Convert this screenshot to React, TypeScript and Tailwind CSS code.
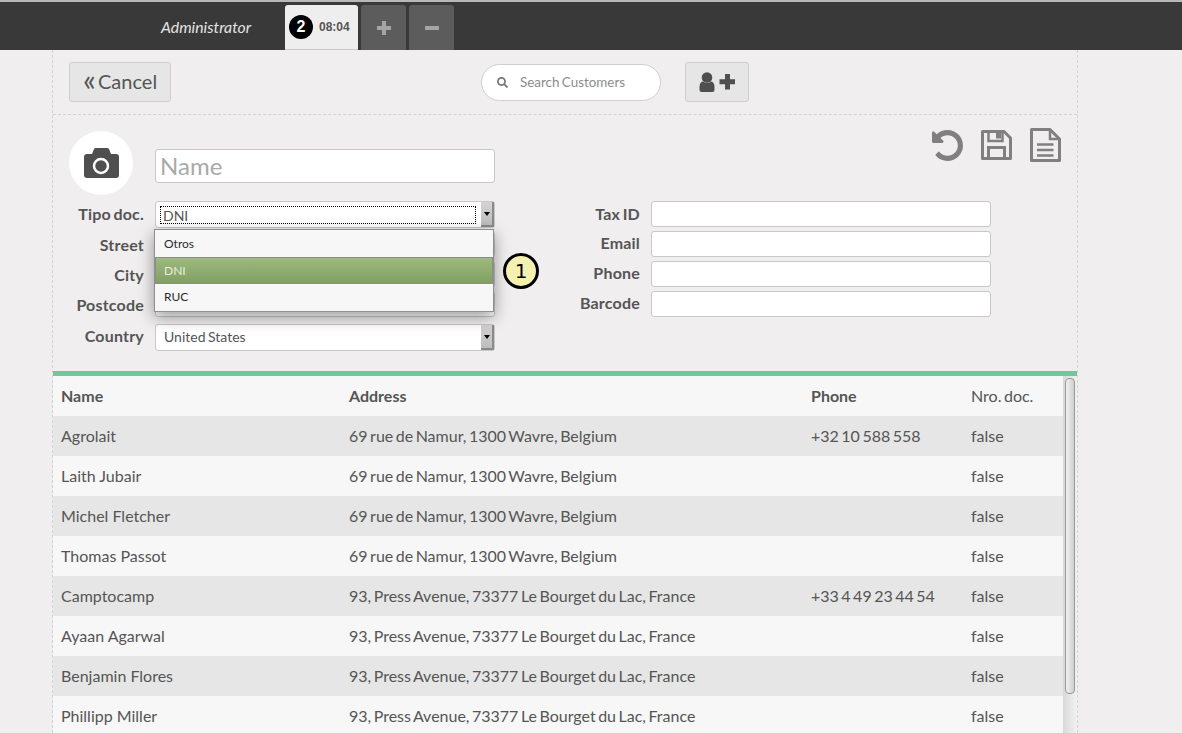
import React from "react";
import { FaSearch } from "react-icons/fa";

const rows: [string, string, string][] = [
  ["Agrolait", "69 rue de Namur, 1300 Wavre, Belgium", "+32 10 588 558"],
  ["Laith Jubair", "69 rue de Namur, 1300 Wavre, Belgium", ""],
  ["Michel Fletcher", "69 rue de Namur, 1300 Wavre, Belgium", ""],
  ["Thomas Passot", "69 rue de Namur, 1300 Wavre, Belgium", ""],
  ["Camptocamp", "93, Press Avenue, 73377 Le Bourget du Lac, France", "+33 4 49 23 44 54"],
  ["Ayaan Agarwal", "93, Press Avenue, 73377 Le Bourget du Lac, France", ""],
  ["Benjamin Flores", "93, Press Avenue, 73377 Le Bourget du Lac, France", ""],
  ["Phillipp Miller", "93, Press Avenue, 73377 Le Bourget du Lac, France", ""],
];

function Arrow() {
  return (
    <div className="w-[13px] h-full flex items-center justify-center bg-gradient-to-b from-[#d4d4d4] to-[#bdbdbd] border-r-2 border-b-2 border-[#8a8a8a]">
      <div className="w-0 h-0 border-l-[3px] border-r-[3px] border-t-[4px] border-l-transparent border-r-transparent border-t-black" />
    </div>
  );
}

function Label({ children, wide = false, leading = "leading-[26px]" }: { children: React.ReactNode; wide?: boolean; leading?: string }) {
  return (
    <div className={(wide ? "w-[75px] " : "w-[70px] ") + leading + " text-right font-bold text-[16px] tracking-[0.2px] [word-spacing:-1.5px] text-[#555555] whitespace-nowrap"}>
      {children}
    </div>
  );
}

function Field({ className = "" }: { className?: string }) {
  return <div className={"bg-white border border-[#c8c8c8] rounded-[3px] h-[26px] " + className} />;
}

function PlusIcon() {
  return (
    <svg width="14" height="14" viewBox="0 0 14 14" fill="#a5a5a5">
      <path d="M5 0h4v5h5v4H9v5H5V9H0V5h5z" />
    </svg>
  );
}

function MinusIcon() {
  return (
    <svg width="14" height="14" viewBox="0 0 14 14" fill="#a5a5a5">
      <path d="M0 5h14v4H0z" />
    </svg>
  );
}

function UserPlusIcon() {
  return (
    <svg width="36" height="20" viewBox="0 0 36 20" fill="#4f4f4f">
      <circle cx="8" cy="5.5" r="5.3" />
      <path d="M.5 20V15Q.5 10 4 9.5Q8 12.5 12 9.5Q15.5 10 15.5 15V18Q15.5 20 13.5 20H2.5Q.5 20 .5 18Z" />
      <path d="M26 2h5v5.2h5v5h-5v5.3h-5v-5.3h-5.5v-5h5.5z" />
    </svg>
  );
}

function CameraIcon() {
  return (
    <svg width="35" height="30" viewBox="0 0 35 30">
      <path fill="#4f4f4f" d="M8 6L10 1Q10.5 0 12 0H23Q24.5 0 25 1L27 6H32Q35 6 35 9V27Q35 30 32 30H3Q0 30 0 27V9Q0 6 3 6Z" />
      <circle cx="17" cy="18" r="7" fill="#4f4f4f" stroke="#ffffff" strokeWidth="2.5" />
    </svg>
  );
}

function UndoIcon() {
  return (
    <svg width="31" height="31" viewBox="0 128 1536 1536" fill="#808080">
      <path d="M1536 896q0 156-61 298t-164 245-245 164-298 61q-172 0-327-72.5t-264-204.5q-7-10-6.5-22.5t8.5-20.5l137-138q10-9 25-9 16 2 23 12 73 95 179 147t225 52q104 0 198.5-40.5t163.5-109.5 109.5-163.5 40.5-198.5-40.5-198.5-109.5-163.5-163.5-109.5-198.5-40.5q-98 0-188 35.5t-160 101.5l137 138q31 30 14 69-17 40-59 40h-448q-26 0-45-19t-19-45v-448q0-42 40-59 39-17 69 14l130 129q107-101 244.5-156.5t284.5-55.5q156 0 298 61t245 164 164 245 61 298z" />
    </svg>
  );
}

function SaveIcon() {
  return (
    <svg width="31" height="30" viewBox="0 0 31 30" fill="none" stroke="#808080">
      <path strokeWidth="3" strokeLinejoin="round" d="M1.5 1.5H23L29.5 8V28.5H1.5Z" />
      <path strokeWidth="2.5" d="M7.5 1.5V11H21.5V1.5" />
      <path strokeWidth="3" d="M7.5 28.5V17.5H23.5V28.5" />
      <rect x="15" y="2.5" width="5" height="6" fill="#808080" stroke="none" />
    </svg>
  );
}

function FileIcon() {
  return (
    <svg width="31" height="34" viewBox="0 0 31 34" fill="none" stroke="#808080">
      <path strokeWidth="3" strokeLinejoin="round" d="M1.5 1.5H20L29.5 11V32.5H1.5Z" />
      <path strokeWidth="2.5" d="M20 1.5V11H29.5" />
      <path strokeWidth="2.5" d="M7 16.5H23.5M7 22H23.5M7 27.5H23.5" />
    </svg>
  );
}

export default function App() {
  return (
    <div className="h-[734px] w-[1182px] overflow-hidden bg-[#f0eeef] text-[#555555] font-['Lato','Noto_Sans',sans-serif] border-b border-[#d0d0d0]">
      <header className="h-[50px] bg-[#393939] border-t-2 border-[#b8b8b8] flex items-end">
        <div className="ml-[161px] w-[124px] h-[48px] pt-[2px] flex items-center text-[15.8px] italic text-[#e4e4e4]">Administrator</div>
        <div className="w-[73px] h-[45px] bg-[#eeeeee] border-b border-[#c8c8c8] rounded-t-[3px] flex items-center pl-[4px] gap-[6px]">
          <span className="w-[24px] h-[24px] rounded-full bg-black text-white font-['Liberation_Sans',sans-serif] font-bold text-[16px] flex items-center justify-center">2</span>
          <span className="text-[12px] font-bold text-[#555555] font-['Liberation_Sans',sans-serif]">08:04</span>
        </div>
        <div className="ml-[3px] w-[45px] h-[45px] bg-[#5c5c5c] rounded-t-[3px] flex items-center justify-center"><PlusIcon /></div>
        <div className="ml-[3px] w-[45px] h-[45px] bg-[#5c5c5c] rounded-t-[3px] flex items-center justify-center"><MinusIcon /></div>
      </header>

      <main className="ml-[52px] w-[1026px] h-[683px] border-l border-r border-dashed border-[#d4d2d3] flex flex-col">
        <div className="h-[65px] shrink-0 border-b border-dashed border-[#d4d2d3] flex items-start pt-[12px] pl-[16px]">
          <button className="w-[102px] h-[40px] bg-[#e6e6e6] border border-[#cfcfcf] rounded-[3px] flex items-center pl-[13px] pb-[2px] text-[20px] text-[#555555]">
            <span className="w-[15px] text-left text-[30px] leading-none -mt-[4px]">«</span>Cancel
          </button>
          <div className="ml-[310px] mt-[2px] w-[180px] h-[37px] bg-white border border-[#cfcfcf] rounded-full flex items-center pl-[15px] gap-[12px] text-[13.4px] [word-spacing:-1px] text-[#8c8c8c]">
            <FaSearch size={11} className="text-[#777777]" /> Search Customers
          </div>
          <button className="ml-[24px] w-[64px] h-[40px] bg-[#e6e6e6] border border-[#cfcfcf] rounded-[3px] flex items-center justify-center">
            <UserPlusIcon />
          </button>
        </div>

        <div className="relative h-[256px] shrink-0 px-[16px] pt-[16px]">
          <div className="flex items-start">
            <div className="w-[64px] h-[64px] rounded-full bg-white flex items-center justify-center"><CameraIcon /></div>
            <div className="ml-[22px] mt-[18px] w-[340px] h-[34px] bg-white border border-[#c8c8c8] rounded-[3px] flex items-center pl-[4px] text-[24px] text-[#a9a9a9]">Name</div>
            <div className="ml-auto flex items-start gap-[18px]">
              <div className="-mt-[1px]"><UndoIcon /></div>
              <div className="-mt-[1px]"><SaveIcon /></div>
              <div className="-mt-[3px]"><FileIcon /></div>
            </div>
          </div>

          <div className="flex mt-[6px]">
            <div className="w-[426px] flex flex-col gap-[4px]">
              <div className="flex h-[26px]">
                <Label wide>Tipo doc.</Label>
                <div className="ml-[11px] flex-1 h-[27px] bg-white border border-[#c8c8c8] rounded-[3px] flex items-stretch">
                  <div className="flex-1 mt-[4px] mb-[3px] ml-[4px] mr-[5px] border border-dotted border-black flex items-center pl-[2px] text-[14px] text-[#555555]">DNI</div>
                  <Arrow />
                </div>
              </div>
              {["Street", "City", "Postcode"].map((l) => (
                <div key={l} className="flex h-[26px]">
                  <Label wide leading="leading-[28px]">{l}</Label>
                  <Field className="ml-[11px] flex-1" />
                </div>
              ))}
              <div className="flex h-[27px] mt-[3px]">
                <Label wide leading="leading-[24px]">Country</Label>
                <div className="ml-[11px] flex-1 h-[27px] bg-white border border-[#c8c8c8] rounded-[3px] flex items-stretch">
                  <div className="flex-1 flex items-center pl-[8px] pb-[2px] text-[14px] [word-spacing:-1px] text-[#555555]">United States</div>
                  <Arrow />
                </div>
              </div>
            </div>
            <div className="ml-[75px] w-[426px] flex flex-col gap-[4px]">
              {["Tax ID", "Email", "Phone", "Barcode"].map((l, i) => (
                <div key={l} className="flex h-[26px] items-stretch">
                  <Label leading={i > 0 ? "leading-[24px]" : "leading-[26px]"}>{l}</Label>
                  <Field className="ml-[11px] w-[340px]" />
                </div>
              ))}
            </div>
          </div>

          <div className="absolute left-[101px] top-[114px] w-[340px] h-[83px] bg-[#f7f7f7] border border-[#8f8f8f] shadow-[0_5px_15px_rgba(0,0,0,0.4)] text-[12px] flex flex-col">
            <div className="h-[27px] flex items-center pl-[9px] text-[#2b2b2b]">Otros</div>
            <div className="h-[27px] flex items-center pl-[8px] text-[#e8eddc] border border-[#8a8f85] bg-gradient-to-b from-[#9eba7e] to-[#80a062]">DNI</div>
            <div className="h-[27px] flex items-center pl-[9px] pb-[2px] text-[#2b2b2b]">RUC</div>
          </div>
          <div className="absolute left-[450px] top-[138px] w-[36px] h-[36px] rounded-full bg-[#f4f0b0] border-[3px] border-black text-black text-[20px] flex items-center justify-center font-['DejaVu_Sans',sans-serif]">1</div>
        </div>

        <div className="h-[5px] shrink-0 bg-[#6ec89b]" />
        <div className="flex-1 flex min-h-0 bg-[#f7f7f7]">
          <table className="w-[1010px] h-fit table-fixed border-collapse text-[16px] [word-spacing:-1.6px] text-[#555555]">
            <colgroup>
              <col className="w-[296px]" />
              <col className="w-[462px]" />
              <col className="w-[160px]" />
              <col />
            </colgroup>
            <thead>
              <tr className="h-[40px] text-left">
                <th className="pl-[8px] font-bold">Name</th>
                <th className="font-bold">Address</th>
                <th className="font-bold">Phone</th>
                <th className="font-normal">Nro. doc.</th>
              </tr>
            </thead>
            <tbody>
              {rows.map((r, i) => (
                <tr key={r[0]} className={"h-[40px] " + (i % 2 === 0 ? "bg-[#e6e6e6]" : "bg-[#f7f7f7]")}>
                  <td className="pl-[8px] [word-spacing:0px]">{r[0]}</td>
                  <td>{r[1]}</td>
                  <td>{r[2]}</td>
                  <td>false</td>
                </tr>
              ))}
            </tbody>
          </table>
          <div className="flex-1 bg-gradient-to-r from-[#d8d8d8] to-[#f2f2f2] px-[2px] pt-[2px]">
            <div className="h-[316px] w-[10px] rounded-[4px] border border-[#9a9a9a] bg-gradient-to-r from-[#f2f2f2] to-[#cfcfcf]" />
          </div>
        </div>
      </main>
    </div>
  );
}
